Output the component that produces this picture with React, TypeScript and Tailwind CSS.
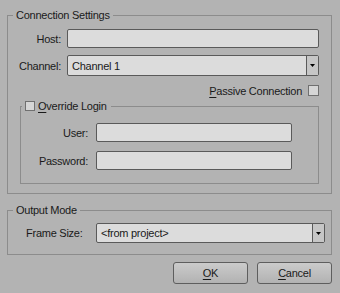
function Arrow() {
  return (
    <svg width="5" height="3" viewBox="0 0 5 3" className="block">
      <polygon points="0,0 5,0 2.5,3" fill="#000" />
    </svg>
  );
}

function Input({ className = "" }: { className?: string }) {
  return (
    <div
      className={
        "h-[19px] border border-[#5a5a5a] rounded-[2px] bg-[#dcdcdc] " + className
      }
    />
  );
}

function Select({ value, className = "" }: { value: string; className?: string }) {
  return (
    <div
      className={
        "flex items-stretch border border-[#5a5a5a] rounded-[2px] bg-[#dcdcdc] " +
        className
      }
    >
      <div className="flex-1 flex items-center pl-[4px] truncate">{value}</div>
      <div className="w-[12px] border-l border-[#5a5a5a] bg-[#c6c6c6] flex items-center justify-center">
        <Arrow />
      </div>
    </div>
  );
}

function Check() {
  return <div className="w-[10px] h-[10px] border border-[#707070] bg-[#d6d6d6]" />;
}

export default function App() {
  return (
    <div className="w-[340px] h-[293px] bg-[#b3b3b3] text-[#1a1a1a] text-[11px] leading-[14px] tracking-[-0.25px] pt-[8px] pl-[7px] pr-[8px] font-['Liberation_Sans',Arial,sans-serif]">
      <fieldset className="border border-[#8c8c8c] pb-[9px]">
        <legend className="ml-[5px] px-[3px]">Connection Settings</legend>
        <div className="flex items-center mt-[7px] pr-[12px]">
          <span className="w-[53px] text-right">Host:</span>
          <Input className="ml-[6px] flex-1" />
        </div>
        <div className="flex items-center mt-[7px] pr-[12px]">
          <span className="w-[53px] text-right">Channel:</span>
          <Select value="Channel 1" className="ml-[6px] flex-1 h-[21px]" />
        </div>
        <div className="flex items-center justify-end mt-[8px] h-[13px] pr-[12px]">
          <span className="mr-[6px]">
            <u className="underline-offset-[2px]">P</u>assive Connection
          </span>
          <div className="w-[11px] h-[11px] border border-[#707070] bg-[#d6d6d6]" />
        </div>
        <fieldset className="border border-[#8c8c8c] mt-[2px] ml-[12px] mr-[12px] pb-[13px]">
          <legend className="ml-[1px] pl-[3px] pr-[4px]">
            <span className="flex items-center h-[14px]">
              <Check />
              <span className="ml-[3px]">
                <u className="underline-offset-[2px]">O</u>verride Login
              </span>
            </span>
          </legend>
          <div className="flex items-center mt-[10px]">
            <span className="w-[67px] text-right">User:</span>
            <Input className="ml-[8px] w-[196px]" />
          </div>
          <div className="flex items-center mt-[9px]">
            <span className="w-[67px] text-right">Password:</span>
            <Input className="ml-[8px] w-[196px]" />
          </div>
        </fieldset>
      </fieldset>

      <fieldset className="border border-[#8c8c8c] mt-[9px] pb-[11px]">
        <legend className="ml-[5px] px-[3px]">Output Mode</legend>
        <div className="flex items-center mt-[6px] pl-[18px]">
          <span className="w-[70px]">Frame Size:</span>
          <Select value="<from project>" className="w-[229px] h-[20px]" />
        </div>
      </fieldset>

      <div className="flex justify-end gap-[9px] mt-[7px]">
        <button className="w-[75px] h-[22px] border border-[#5e5e5e] rounded-[3px] bg-linear-to-b from-[#cbcbcb] to-[#b2b2b2] flex items-center justify-center">
          <span>
            <u className="underline-offset-[2px]">O</u>K
          </span>
        </button>
        <button className="w-[75px] h-[22px] border border-[#5e5e5e] rounded-[3px] bg-linear-to-b from-[#cbcbcb] to-[#b2b2b2] flex items-center justify-center">
          <span>
            <u className="underline-offset-[2px]">C</u>ancel
          </span>
        </button>
      </div>
    </div>
  );
}
